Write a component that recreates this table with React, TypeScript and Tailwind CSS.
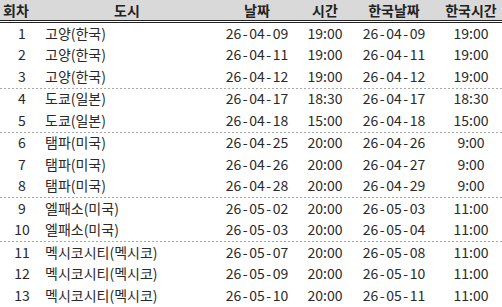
const rows = [
  { no: 1, city: '고양(한국)', date: '26-04-09', time: '19:00', kDate: '26-04-09', kTime: '19:00' },
  { no: 2, city: '고양(한국)', date: '26-04-11', time: '19:00', kDate: '26-04-11', kTime: '19:00' },
  { no: 3, city: '고양(한국)', date: '26-04-12', time: '19:00', kDate: '26-04-12', kTime: '19:00', sep: true },
  { no: 4, city: '도쿄(일본)', date: '26-04-17', time: '18:30', kDate: '26-04-17', kTime: '18:30' },
  { no: 5, city: '도쿄(일본)', date: '26-04-18', time: '15:00', kDate: '26-04-18', kTime: '15:00', sep: true },
  { no: 6, city: '탬파(미국)', date: '26-04-25', time: '20:00', kDate: '26-04-26', kTime: '9:00' },
  { no: 7, city: '탬파(미국)', date: '26-04-26', time: '20:00', kDate: '26-04-27', kTime: '9:00' },
  { no: 8, city: '탬파(미국)', date: '26-04-28', time: '20:00', kDate: '26-04-29', kTime: '9:00', sep: true },
  { no: 9, city: '엘패소(미국)', date: '26-05-02', time: '20:00', kDate: '26-05-03', kTime: '11:00' },
  { no: 10, city: '엘패소(미국)', date: '26-05-03', time: '20:00', kDate: '26-05-04', kTime: '11:00', sep: true },
  { no: 11, city: '멕시코시티(멕시코)', date: '26-05-07', time: '20:00', kDate: '26-05-08', kTime: '11:00' },
  { no: 12, city: '멕시코시티(멕시코)', date: '26-05-09', time: '20:00', kDate: '26-05-10', kTime: '11:00' },
  { no: 13, city: '멕시코시티(멕시코)', date: '26-05-10', time: '20:00', kDate: '26-05-11', kTime: '11:00', sep: true },
];

const cols = 'grid grid-cols-[42px_170px_90px_46px_92px_62px]';

// wider hyphens, like the original font
const DateText = ({ value }: { value: string }) => {
  const parts = value.split('-');
  return (
    <>
      {parts.map((p, i) => (
        <span key={i}>
          {i > 0 && <span className="mx-[1.5px]">-</span>}
          {p}
        </span>
      ))}
    </>
  );
};

export default function App() {
  return (
    <div className="w-[502px] h-[307px] overflow-hidden bg-white text-[14px] text-[#2a2a2a] font-['Noto_Sans_CJK_KR','Noto_Sans',sans-serif]">
      <div className={`${cols} h-[20px] items-center bg-[#d9d9d9] font-bold text-[#222] leading-none`}>
        <div className="pl-[3px]">회차</div>
        <div className="text-center">도시</div>
        <div className="text-center">날짜</div>
        <div className="text-center">시간</div>
        <div className="text-center">한국날짜</div>
        <div className="text-center">한국시간</div>
      </div>
      <div className="h-[3px] border-y border-[#222]" />
      {rows.map((r) => (
        <div key={r.no}>
          <div className={`${cols} h-[21.5px] items-center leading-none pb-[2px]`}>
            <div className="text-center pl-[2px]">{r.no}</div>
            <div className="pl-[3px]">{r.city}</div>
            <div className="text-center"><DateText value={r.date} /></div>
            <div className="text-center">{r.time}</div>
            <div className="text-center"><DateText value={r.kDate} /></div>
            <div className="text-center">{r.kTime}</div>
          </div>
          {r.sep && (
            <div className="h-px bg-[repeating-linear-gradient(to_right,#a8a8a8_0_2px,transparent_2px_4px)]" />
          )}
        </div>
      ))}
    </div>
  );
}
